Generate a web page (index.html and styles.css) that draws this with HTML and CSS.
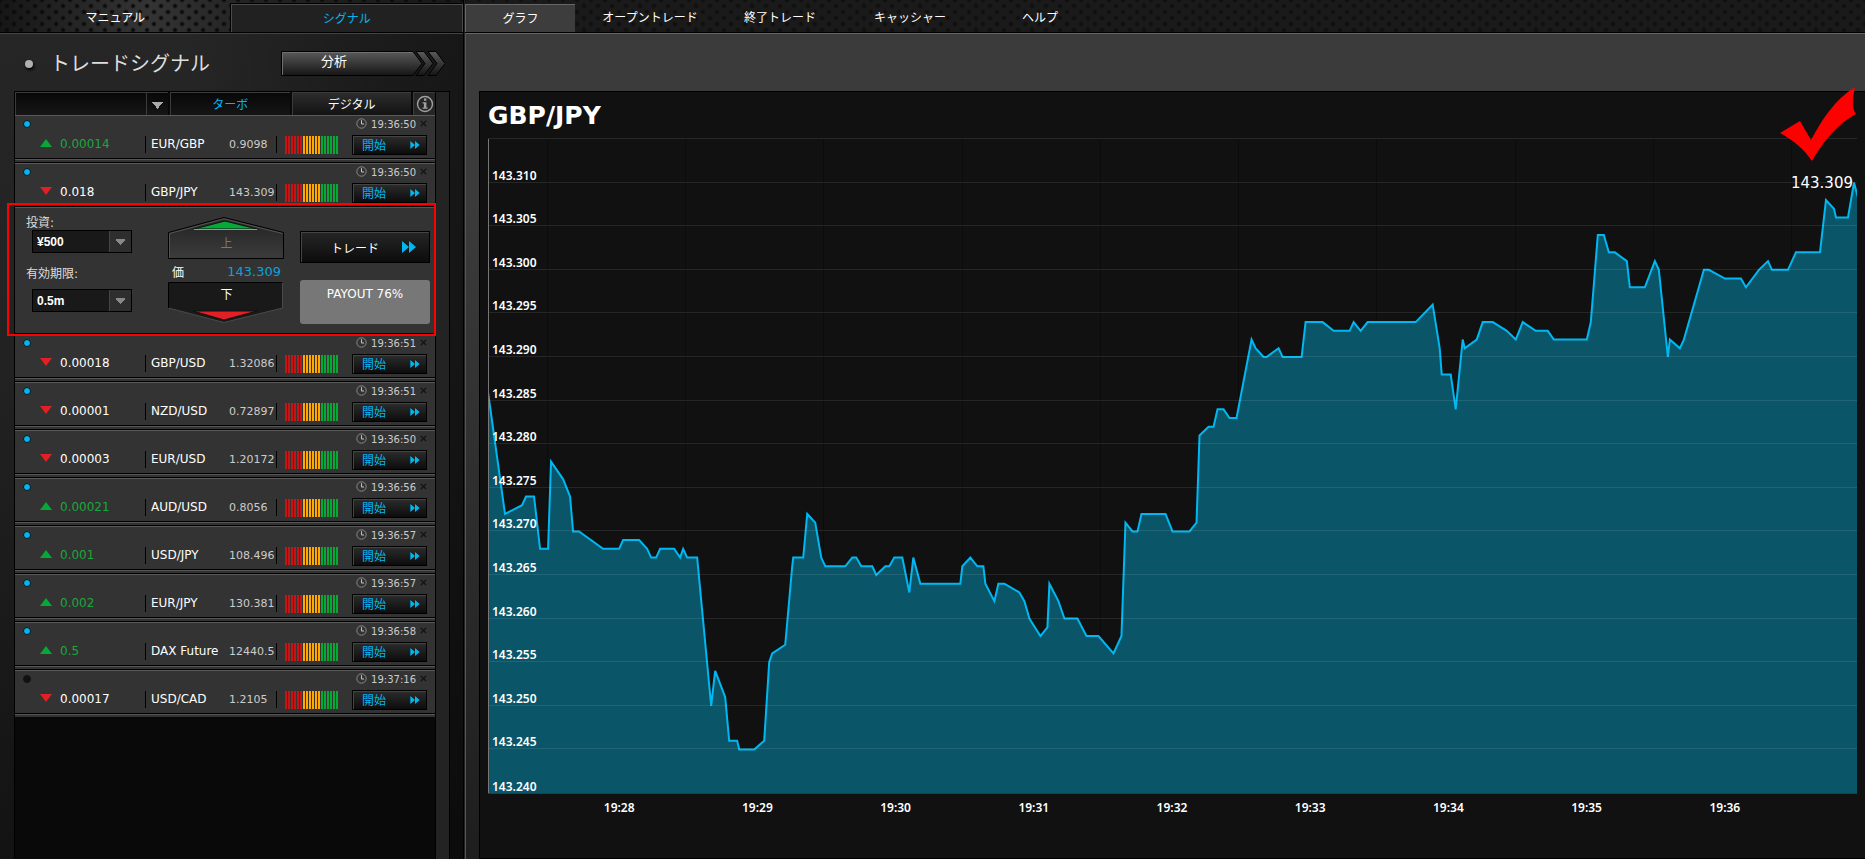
FILE: index.html
```html
<!DOCTYPE html>
<html lang="ja">
  <head>
    <meta charset="UTF-8" />
    <meta name="viewport" content="width=device-width, initial-scale=1.0" />
    <title>トレードシグナル</title>
    <link rel="stylesheet" href="styles.css">
  </head>

  <body>
    <!-- Shared icons -->
    <svg class="sprite" aria-hidden="true">
      <symbol id="clock" viewBox="0 0 11 11">
        <circle cx="5.5" cy="5.5" r="4.7" fill="none" stroke="#8a8a8a" />
        <path d="M5.5 2.2V6H8" fill="none" stroke="#c8c8c8" />
      </symbol>
      <symbol id="close" viewBox="0 0 7 7">
        <path d="M0.8 0.8L6.2 6.2M6.2 0.8L0.8 6.2" stroke="#101010" stroke-width="1.2" />
      </symbol>
      <symbol id="up" viewBox="0 0 12 8"><path d="M0 8L6 0L12 8Z" fill="#06a838" /></symbol>
      <symbol id="down" viewBox="0 0 12 8"><path d="M0 0H12L6 8Z" fill="#e01f26" /></symbol>
      <symbol id="forward" viewBox="0 0 14 12"><path d="M0 0L7 6V0L14 6L7 12V6L0 12Z" fill="#00b7f1" /></symbol>
    </svg>

    <div class="layout">
      <section class="sidebar">
        <nav class="side-tabs">
          <a href="#manual">マニュアル</a>
          <a href="#signal" class="active">シグナル</a>
        </nav>

        <div class="side-body">
          <div class="side-head">
            <span class="bullet"></span>
            <h1>トレードシグナル</h1>
            <button class="analysis">
              <svg viewBox="0 0 164 25" aria-hidden="true">
                <defs>
                  <linearGradient id="metal" x1="0" y1="0" x2="0" y2="1">
                    <stop offset="0" stop-color="#5a5a5a" />
                    <stop offset="1" stop-color="#151515" />
                  </linearGradient>
                </defs>
                <g fill="url(#metal)" stroke="#000">
                  <path d="M0.5 0.5H132L141 12.5L132 24.5H0.5Z" />
                  <path d="M135 0.5H143L152 12.5L143 24.5H135L144 12.5Z" />
                  <path d="M147 0.5H155L164 12.5L155 24.5H147L156 12.5Z" />
                </g>
                <path d="M1.5 24V1.5H131" fill="none" stroke="#707070" />
              </svg>
              <span>分析</span>
            </button>
          </div>

          <div class="signals">
            <div class="list">
              <div class="filters">
                <select class="filter" aria-label="フィルター">
                  <option></option>
                </select>
                <button class="mode active">ターボ</button>
                <button class="mode">デジタル</button>
                <button class="info" aria-label="情報">
                  <svg width="18" height="18" viewBox="0 0 18 18">
                    <circle cx="9" cy="9" r="7.5" fill="none" stroke="#a0a0a0" stroke-width="1.4" />
                    <path d="M8 3.6H10.4V5.8H8ZM6.6 7.2H10.4V12.4H11.6V13.8H6.6V12.4H7.9V8.6H6.6Z" fill="#a0a0a0" />
                  </svg>
                </button>
              </div>

              <div class="signal">
                <div class="signal-top"><span class="dot"></span><svg class="i-clock"><use href="#clock" /></svg><time>19:36:50</time><button class="close" aria-label="閉じる"><svg><use href="#close" /></svg></button></div>
                <div class="signal-main"><svg class="arrow"><use href="#up" /></svg><span class="change up">0.00014</span><span class="pair">EUR/GBP</span><span class="rate">0.9098</span><span class="meter"></span><button class="start">開始<svg><use href="#forward" /></svg></button></div>
              </div>

              <div class="signal open">
                <div class="signal-top"><span class="dot"></span><svg class="i-clock"><use href="#clock" /></svg><time>19:36:50</time><button class="close" aria-label="閉じる"><svg><use href="#close" /></svg></button></div>
                <div class="signal-main"><svg class="arrow"><use href="#down" /></svg><span class="change">0.018</span><span class="pair">GBP/JPY</span><span class="rate">143.309</span><span class="meter"></span><button class="start">開始<svg><use href="#forward" /></svg></button></div>
              </div>

              <!-- Trade form of the opened signal -->
              <form class="trade">
                <div class="trade-options">
                  <label for="amount">投資:</label>
                  <select id="amount">
                    <option>¥500</option>
                  </select>
                  <label for="expiry">有効期限:</label>
                  <select id="expiry">
                    <option>0.5m</option>
                  </select>
                </div>

                <div class="direction">
                  <button type="button" class="dir call">
                    <svg viewBox="0 0 117 43" aria-hidden="true">
                      <defs>
                        <linearGradient id="dark" x1="0" y1="0" x2="0" y2="1">
                          <stop offset="0.3" stop-color="#2a2a2a" />
                          <stop offset="1" stop-color="#3c3c3c" />
                        </linearGradient>
                      </defs>
                      <path d="M0.5 15.5L56 0.5L115.5 15.5V41.5H0.5Z" fill="url(#dark)" stroke="#000" />
                      <path d="M1.5 41V16.5L56 1.8L114.5 16.5" fill="none" stroke="#555" />
                      <path d="M26 12L57 4L89 12Z" fill="#06a838" stroke="#111" />
                      <path d="M26 12.5H89" stroke="#999" />
                    </svg>
                    <span>上</span>
                  </button>
                  <p class="price"><span>価</span><strong>143.309</strong></p>
                  <button type="button" class="dir put">
                    <svg viewBox="0 0 117 43" aria-hidden="true">
                      <path d="M0.5 0.5H114.5V26L56 40.5L0.5 26Z" fill="#191919" stroke="#4a4a4a" />
                      <path d="M0.5 26V0.5H114.5" fill="none" stroke="#000" />
                      <path d="M25 29H89L56 38Z" fill="#e01f26" stroke="#111" />
                    </svg>
                    <span>下</span>
                  </button>
                </div>

                <div class="trade-action">
                  <button type="button" class="submit">トレード<svg><use href="#forward" /></svg></button>
                  <p class="payout">PAYOUT 76%</p>
                </div>
              </form>

              <div class="signal">
                <div class="signal-top"><span class="dot"></span><svg class="i-clock"><use href="#clock" /></svg><time>19:36:51</time><button class="close" aria-label="閉じる"><svg><use href="#close" /></svg></button></div>
                <div class="signal-main"><svg class="arrow"><use href="#down" /></svg><span class="change">0.00018</span><span class="pair">GBP/USD</span><span class="rate">1.32086</span><span class="meter"></span><button class="start">開始<svg><use href="#forward" /></svg></button></div>
              </div>

              <div class="signal">
                <div class="signal-top"><span class="dot"></span><svg class="i-clock"><use href="#clock" /></svg><time>19:36:51</time><button class="close" aria-label="閉じる"><svg><use href="#close" /></svg></button></div>
                <div class="signal-main"><svg class="arrow"><use href="#down" /></svg><span class="change">0.00001</span><span class="pair">NZD/USD</span><span class="rate">0.72897</span><span class="meter"></span><button class="start">開始<svg><use href="#forward" /></svg></button></div>
              </div>

              <div class="signal">
                <div class="signal-top"><span class="dot"></span><svg class="i-clock"><use href="#clock" /></svg><time>19:36:50</time><button class="close" aria-label="閉じる"><svg><use href="#close" /></svg></button></div>
                <div class="signal-main"><svg class="arrow"><use href="#down" /></svg><span class="change">0.00003</span><span class="pair">EUR/USD</span><span class="rate">1.20172</span><span class="meter"></span><button class="start">開始<svg><use href="#forward" /></svg></button></div>
              </div>

              <div class="signal">
                <div class="signal-top"><span class="dot"></span><svg class="i-clock"><use href="#clock" /></svg><time>19:36:56</time><button class="close" aria-label="閉じる"><svg><use href="#close" /></svg></button></div>
                <div class="signal-main"><svg class="arrow"><use href="#up" /></svg><span class="change up">0.00021</span><span class="pair">AUD/USD</span><span class="rate">0.8056</span><span class="meter"></span><button class="start">開始<svg><use href="#forward" /></svg></button></div>
              </div>

              <div class="signal">
                <div class="signal-top"><span class="dot"></span><svg class="i-clock"><use href="#clock" /></svg><time>19:36:57</time><button class="close" aria-label="閉じる"><svg><use href="#close" /></svg></button></div>
                <div class="signal-main"><svg class="arrow"><use href="#up" /></svg><span class="change up">0.001</span><span class="pair">USD/JPY</span><span class="rate">108.496</span><span class="meter"></span><button class="start">開始<svg><use href="#forward" /></svg></button></div>
              </div>

              <div class="signal">
                <div class="signal-top"><span class="dot"></span><svg class="i-clock"><use href="#clock" /></svg><time>19:36:57</time><button class="close" aria-label="閉じる"><svg><use href="#close" /></svg></button></div>
                <div class="signal-main"><svg class="arrow"><use href="#up" /></svg><span class="change up">0.002</span><span class="pair">EUR/JPY</span><span class="rate">130.381</span><span class="meter"></span><button class="start">開始<svg><use href="#forward" /></svg></button></div>
              </div>

              <div class="signal">
                <div class="signal-top"><span class="dot"></span><svg class="i-clock"><use href="#clock" /></svg><time>19:36:58</time><button class="close" aria-label="閉じる"><svg><use href="#close" /></svg></button></div>
                <div class="signal-main"><svg class="arrow"><use href="#up" /></svg><span class="change up">0.5</span><span class="pair">DAX Future</span><span class="rate">12440.5</span><span class="meter"></span><button class="start">開始<svg><use href="#forward" /></svg></button></div>
              </div>

              <div class="signal">
                <div class="signal-top"><span class="dot off"></span><svg class="i-clock"><use href="#clock" /></svg><time>19:37:16</time><button class="close" aria-label="閉じる"><svg><use href="#close" /></svg></button></div>
                <div class="signal-main"><svg class="arrow"><use href="#down" /></svg><span class="change">0.00017</span><span class="pair">USD/CAD</span><span class="rate">1.2105</span><span class="meter"></span><button class="start">開始<svg><use href="#forward" /></svg></button></div>
              </div>
            </div>
            <div class="scroll-track"></div>
          </div>
        </div>
      </section>

      <main class="content">
        <nav class="main-tabs">
          <a href="#graph" class="active">グラフ</a>
          <a href="#open">オープントレード</a>
          <a href="#closed">終了トレード</a>
          <a href="#cashier">キャッシャー</a>
          <a href="#help">ヘルプ</a>
        </nav>

        <div class="content-body">
          <section class="chart">
            <h2>GBP/JPY</h2>
            <div class="plot">
              <div class="v-lines"><i></i><i></i><i></i><i></i><i></i><i></i><i></i><i></i><i></i><i></i></div>
              <!-- x: time axis, y: thousandths below 143.315; the outline closes outside the view -->
              <svg class="series" viewBox="0 0 1368 75" preserveAspectRatio="none" aria-hidden="true">
                <path d="M-20 90V29H0L17 43L34 42L38 41L46 41L52 47L60 47L63 37L69 38L75 39L82 41L85 45L91 45L115 47L131 47L135 46L151 46L159 47L163 48L168 48L172 47L186 47L192 48L195 47L199 48L209 48L223 65L227 61L237 64L241 69L249 69L251 70L266 70L276 69L281 60L284 59L297 58L304 49L305 48L315 48L319 43L327 44L333 48L337 49L357 49L364 48L368 48L373 49L384 49L388 50L397 49L401 49L406 48L414 48L421 52L425 48L432 51L472 51L474 49L482 48L489 49L495 49L497 51L506 53L510 51L516 51L531 52L536 53L541 55L552 57L559 56L561 51L570 53L576 55L589 55L598 57L610 57L625 59L633 57L637 44L644 45L649 45L653 43L677 43L684 45L701 45L708 44L711 34L720 33L725 33L729 31L735 31L741 32L748 32L763 23L767 24L775 25L778 25L790 24L794 25L813 25L817 21L834 21L845 22L861 22L865 21L872 22L879 21L927 21L944 19L951 24L953 27L962 27L967 31L974 23L976 24L988 23L994 21L1004 21L1018 22L1027 23L1034 21L1047 22L1059 22L1065 23L1098 23L1102 21L1109 11L1115 11L1120 13L1126 13L1138 14L1141 17L1156 17L1166 14L1170 15L1179 25L1181 23L1191 24L1195 23L1215 15L1220 15L1236 16L1252 16L1257 17L1270 15L1279 14L1283 15L1299 15L1307 13L1331 13L1337 7L1345 8L1347 9L1359 9L1365 5L1372 8V90Z" />
              </svg>
              <div class="y-axis">
                <span>143.310</span><span>143.305</span><span>143.300</span><span>143.295</span><span>143.290</span>
                <span>143.285</span><span>143.280</span><span>143.275</span><span>143.270</span><span>143.265</span>
                <span>143.260</span><span>143.255</span><span>143.250</span><span>143.245</span><span>143.240</span>
              </div>
              <span class="last-price">143.309</span>
              <svg class="check" viewBox="0 0 76 74" aria-hidden="true">
                <path d="M0 46L20 34L31 53C42 33 54 13 75 0C73 10 71 20 76 27C58 37 44 53 32 74C24 62 13 53 0 46Z" fill="#fe0000" />
              </svg>
            </div>
            <div class="x-axis">
              <span>19:28</span><span>19:29</span><span>19:30</span><span>19:31</span><span>19:32</span><span>19:33</span><span>19:34</span><span>19:35</span><span>19:36</span>
            </div>
          </section>
        </div>
      </main>
    </div>
  </body>
</html>
```
FILE: styles.css
```css
* {
  box-sizing: border-box;
}

body {
  margin: 0;
  background: #111;
  color: #fff;
  font-family: "DejaVu Sans", "Noto Sans CJK JP", sans-serif;
  font-size: 12px;
}

h1,
h2,
p {
  margin: 0;
  font-weight: normal;
}

a {
  color: inherit;
  text-decoration: none;
}

button,
select {
  margin: 0;
  padding: 0;
  border: none;
  border-radius: 0;
  color: inherit;
  font-family: inherit;
  font-size: 12px;
  cursor: pointer;
}

svg {
  display: block;
}

.sprite {
  position: absolute;
  width: 0;
  height: 0;
}

.layout {
  display: flex;
  min-height: 100vh;
}

/* Perforated metal behind both tab bars */
.side-tabs,
.main-tabs {
  display: flex;
  height: 33px;
  padding-top: 4px;
  border-bottom: 1px solid #000;
  background-image:
    radial-gradient(circle, #0b0b0b 1px, transparent 3px),
    radial-gradient(circle, #0b0b0b 1px, transparent 3px),
    linear-gradient(90deg, #161616, #343434 32%, #222 55%, #181818);
  background-size: 14px 12px, 14px 12px, 100% 100%;
  background-position: 0 0, 7px 6px, 0 0;
}

.side-tabs a,
.main-tabs a {
  display: flex;
  align-items: center;
  justify-content: center;
  line-height: 18px;
}

/* Left side */
.sidebar {
  display: flex;
  flex-direction: column;
  flex: 0 0 464px;
  border-right: 1px solid #000;
}

.side-tabs a {
  flex: 1;
}

.side-tabs .active {
  border: 1px solid #4a4a4a;
  border-bottom: none;
  box-shadow: -1px -1px 0 #000;
  background: #212121;
  color: #00b7f1;
}

.side-body {
  flex: 1;
  display: flex;
  flex-direction: column;
  border-top: 1px solid #444;
  background: linear-gradient(90deg, rgba(0, 0, 0, 0) 40%, rgba(0, 0, 0, 0.4)), linear-gradient(#262626, #222 40%, #131313);
}

.side-head {
  display: flex;
  align-items: center;
  height: 57px;
  padding: 2px 18px 0 25px;
}

.bullet {
  width: 8px;
  height: 8px;
  border-radius: 50%;
  background: #b0b0b0;
  box-shadow: 1px 2px 3px #000;
}

.side-head h1 {
  flex: 1;
  margin-left: 17px;
  color: #ddd;
  font-size: 20px;
  line-height: 28px;
}

.analysis {
  display: grid;
  width: 164px;
  height: 25px;
  background: none;
}

.analysis svg,
.analysis span {
  grid-area: 1 / 1;
}

.analysis svg {
  width: 164px;
  height: 25px;
}

.analysis span {
  width: 106px;
  line-height: 22px;
  font-size: 13px;
}

.signals {
  flex: 1;
  display: flex;
  margin: 0 13px 0 14px;
  border: 1px solid #000;
  border-bottom: none;
}

.list {
  flex: 1;
  background: #090909;
}

.scroll-track {
  width: 14px;
  border-left: 1px solid #000;
  background: #232323;
}

.filters {
  display: flex;
  gap: 2px;
  height: 23px;
}

.filters button,
.filters select {
  border: 1px solid #3c3c3c;
  border-right: none;
  border-bottom: none;
}

.filters .filter {
  flex: 0 0 153px;
  appearance: none;
  background:
    linear-gradient(#3c3c3c, #3c3c3c) 130px 0 / 1px 100% no-repeat,
    conic-gradient(from -38deg at 50% 100%, #aaa 76deg, transparent 0) 136px 9px / 11px 7px no-repeat,
    linear-gradient(#080808, #161616);
}

.filters .mode {
  flex: 1;
  padding-bottom: 2px;
  background: linear-gradient(#2c2c2c, #131313);
}

.filters .mode.active {
  background: linear-gradient(#080808, #151515);
  color: #00b7f1;
}

.filters .info {
  display: flex;
  align-items: center;
  justify-content: center;
  flex: 0 0 22px;
  background: #262626;
}

/* One signal, followed by a thin strip */
.signal {
  height: 48px;
  border-top: 1px solid #5a5a5a;
  background: linear-gradient(#000, #000) 0 42px / 100% 1px no-repeat,
    linear-gradient(#555, #555) 0 43px / 100% 1px no-repeat, #333;
  border-bottom: 1px solid #000;
}

.signal.open {
  height: 44px;
}

.signal:last-child {
  height: 47px;
  border-bottom: none;
}

.signal-top {
  display: flex;
  align-items: center;
  height: 15px;
  padding: 0 8px;
}

.dot {
  width: 8px;
  height: 8px;
  margin-right: auto;
  border: 1px solid #111;
  border-radius: 50%;
  background: #00b7f1;
}

.dot.off {
  background: #111;
}

.i-clock {
  width: 11px;
  height: 11px;
}

.signal-top time {
  margin: 2px 4px 0;
  color: #ccc;
  font-size: 10px;
}

.close {
  background: none;
}

.close svg {
  width: 7px;
  height: 7px;
}

.signal-main {
  display: flex;
  align-items: center;
  height: 27px;
  padding: 0 8px 0 25px;
}

.arrow {
  width: 12px;
  height: 8px;
  margin-bottom: 4px;
}

.change {
  width: 85px;
  margin-left: 8px;
  margin-bottom: 2px;
}

.change.up {
  color: #1aa83c;
}

.pair {
  width: 84px;
  padding-left: 5px;
  border-left: 1px solid #000;
  line-height: 17px;
  white-space: nowrap;
}

.rate {
  width: 48px;
  border-right: 1px solid #000;
  color: #ccc;
  font-size: 11px;
  line-height: 17px;
}

.meter {
  width: 53px;
  height: 18px;
  margin-left: 8px;
  background:
    repeating-linear-gradient(90deg, transparent 0 2px, #333 2px 3px),
    linear-gradient(90deg, #c81414 18px, #ffa800 18px 36px, #06a838 36px);
}

.start {
  display: flex;
  align-items: center;
  justify-content: space-between;
  width: 75px;
  height: 20px;
  margin-left: auto;
  padding: 0 6px 0 9px;
  border: 1px solid #000;
  box-shadow: inset 1px 1px 0 #444;
  background: linear-gradient(#2c2c2c, #0c0c0c);
  color: #00b7f1;
}

.start svg {
  width: 10px;
  height: 8px;
}

/* Trade form */
.trade {
  display: flex;
  position: relative;
  height: 127px;
  padding: 9px 5px 0 11px;
  border-top: 1px solid #555;
  border-bottom: 1px solid #000;
  background: #333;
}

/* Red highlight round the opened form */
.trade::after {
  content: "";
  position: absolute;
  inset: -5px -1px -3px -8px;
  border: 2px solid #fe0000;
  pointer-events: none;
}

.trade-options {
  flex: 1;
}

.trade-options label {
  display: block;
  height: 13px;
  color: #ddd;
  line-height: 13px;
}

.trade-options select {
  display: block;
  appearance: none;
  width: 100px;
  height: 23px;
  margin: 0 0 15px 6px;
  padding: 0 4px;
  border: 1px solid #000;
  background:
    linear-gradient(#444, #444) 76px 0 / 1px 100% no-repeat,
    conic-gradient(from -42deg at 50% 100%, #888 84deg, transparent 0) 82px 8px / 11px 6px no-repeat,
    linear-gradient(90deg, #191919 76px, #2e2e2e 76px);
  font-family: "Liberation Sans", sans-serif;
  font-weight: bold;
}

.trade-options #expiry {
  margin-top: 8px;
}

.direction {
  width: 117px;
}

.dir {
  display: grid;
  width: 117px;
  height: 43px;
  background: none;
}

.dir svg,
.dir span {
  grid-area: 1 / 1;
}

.dir svg {
  width: 117px;
  height: 43px;
}

.dir span {
  line-height: 16px;
}

.call span {
  margin-top: 19px;
  color: #777;
}

.put span {
  margin-top: 5px;
}

.price {
  display: flex;
  align-items: center;
  justify-content: space-between;
  height: 22px;
  padding: 0 4px;
}

.price strong {
  color: #10a0d8;
  font-size: 13px;
  font-weight: normal;
}

.trade-action {
  width: 130px;
  margin: 14px 0 0 15px;
}

.submit {
  display: flex;
  align-items: center;
  justify-content: space-between;
  width: 130px;
  height: 32px;
  padding: 0 13px 0 30px;
  border: 1px solid #000;
  box-shadow: inset 1px 1px 0 #444;
  background: linear-gradient(#262626, #0c0c0c);
}

.submit svg {
  width: 14px;
  height: 12px;
}

.payout {
  height: 44px;
  margin-top: 17px;
  padding-top: 6px;
  border-radius: 3px;
  background: #777;
  line-height: 16px;
  text-align: center;
}

/* Right side */
.content {
  display: flex;
  flex-direction: column;
  flex: 1;
  min-width: 0;
  padding-left: 1px;
  background: #222;
}

.main-tabs {
  gap: 20px;
  background-image:
    radial-gradient(circle, #0f0f0f 1px, transparent 3px),
    radial-gradient(circle, #0f0f0f 1px, transparent 3px),
    linear-gradient(#1a1a1a, #1a1a1a);
}

.main-tabs a {
  flex: 0 0 110px;
}

.main-tabs .active {
  border-top: 1px solid #666;
  border-left: 1px solid #666;
  background: #3d3d3d;
}

.content-body {
  flex: 1;
  display: flex;
  padding: 57px 0 0 13px;
  border-top: 1px solid #666;
  border-left: 1px solid #555;
  background: linear-gradient(#3b3b3b 20%, #1e1e1e);
}

.chart {
  flex: 1;
  display: flex;
  flex-direction: column;
  padding: 10px 8px 0 8px;
  border: 1px solid #000;
  border-right: none;
  background: #111;
}

.chart h2 {
  height: 36px;
  font-size: 25px;
  font-weight: bold;
  line-height: 28px;
}

.plot {
  flex: 1;
  display: grid;
  grid-template-columns: minmax(0, 1fr);
  grid-template-rows: minmax(0, 1fr);
  position: relative;
  min-height: 420px;
  border-top: 1px solid #282828;
  border-bottom: 1px solid #383838;
}

.v-lines,
.series,
.y-axis {
  grid-area: 1 / 1;
}

.v-lines {
  display: grid;
  grid-template-columns: 60fr repeat(9, 138fr) 65fr;
}

.v-lines i {
  border-right: 1px solid #0c0c0c;
}

.series {
  width: 100%;
  height: 100%;
  overflow: hidden;
}

.series path {
  fill: #0a5568;
  stroke: #00b7f1;
  stroke-width: 2px;
  vector-effect: non-scaling-stroke;
}

.y-axis {
  display: grid;
  grid-template-rows: repeat(15, 1fr);
  border-left: 1px solid #777;
  z-index: 1;
}

.y-axis span {
  display: flex;
  align-items: flex-end;
  padding-left: 3px;
  border-bottom: 1px solid rgba(255, 255, 255, 0.09);
  font-family: "Noto Sans", sans-serif;
  font-size: 12px;
  font-weight: 600;
  line-height: 13px;
}

.y-axis span:last-child {
  border-bottom: none;
}

.last-price {
  position: absolute;
  right: 4px;
  top: 35px;
  z-index: 2;
  font-size: 15px;
  line-height: 18px;
}

.check {
  position: absolute;
  right: 1px;
  top: -52px;
  z-index: 2;
  width: 76px;
  height: 74px;
}

/* Labels sit halfway between the vertical lines */
.x-axis {
  display: grid;
  grid-template-columns: 62fr repeat(9, 138fr) 63fr;
  height: 64px;
  padding-top: 6px;
  font-family: "Noto Sans", sans-serif;
  font-size: 12px;
  font-weight: 600;
  line-height: 16px;
  text-align: center;
}

.x-axis::before {
  content: "";
}
```
